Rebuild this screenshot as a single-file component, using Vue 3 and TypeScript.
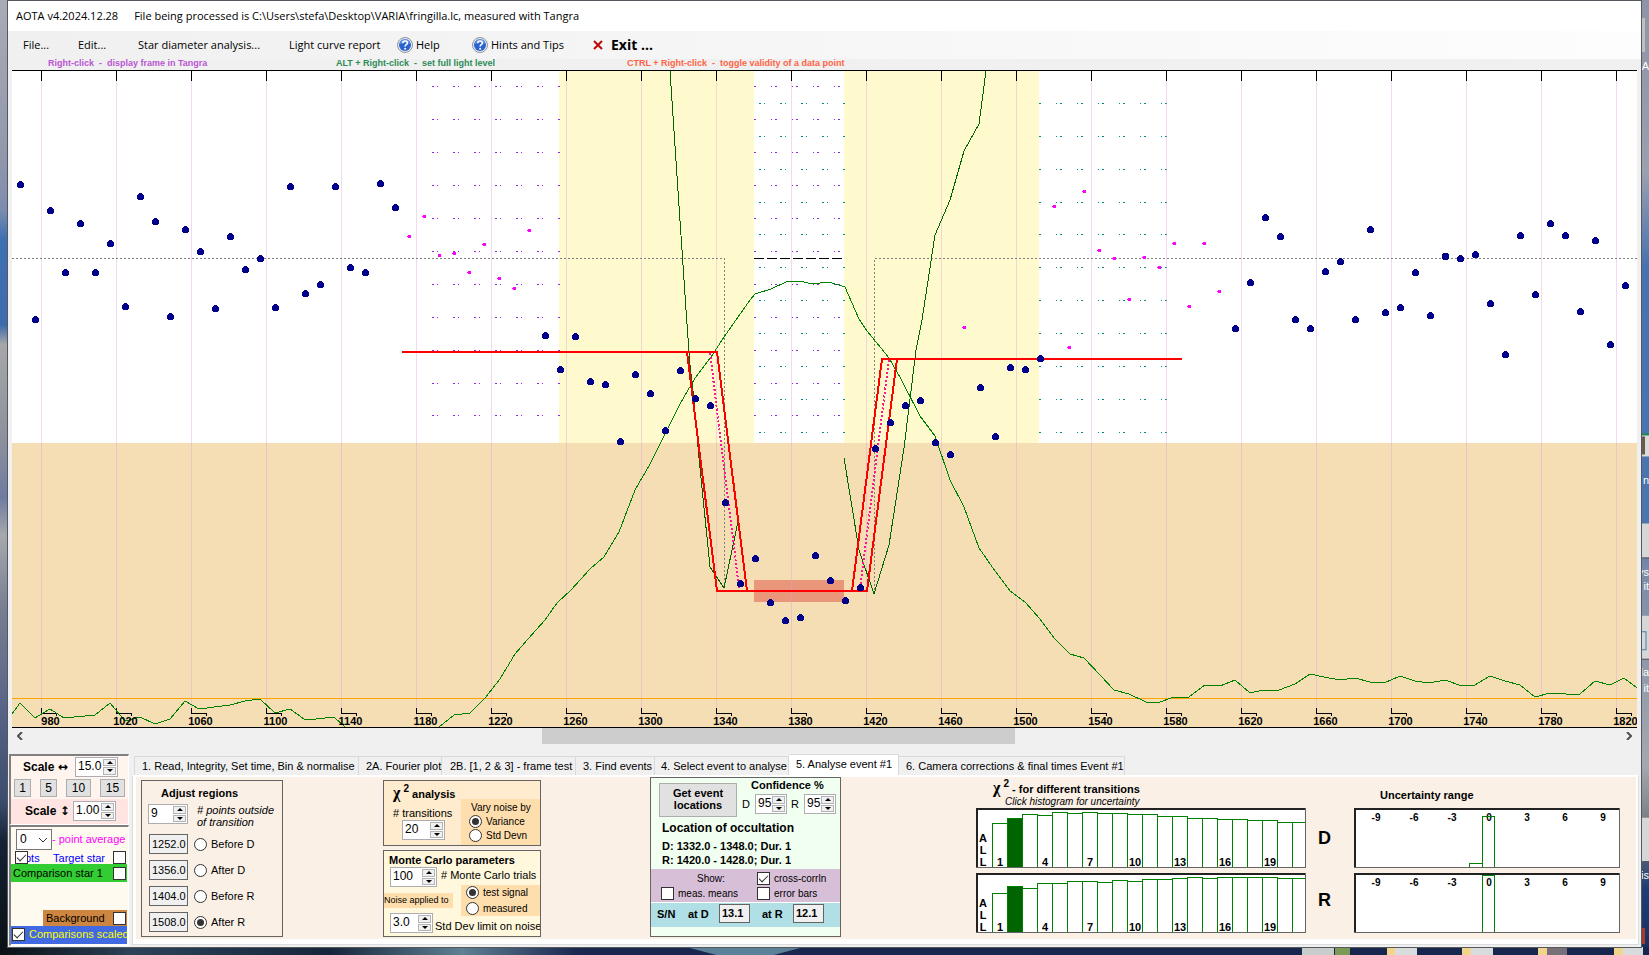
<script setup lang="ts">
import { defineComponent, h, ref } from 'vue'

const Spin = defineComponent({
  props: { label: String, value: String, id: String },
  setup(props) {
    return () =>
      h('span', { class: 'spin' }, [
        h('input', { id: props.id, type: 'text', value: props.value, 'aria-label': props.label }),
        h('span', { class: 'updown' }, [
          h('button', { type: 'button', class: 'up', 'aria-label': props.label + ' up' }),
          h('button', { type: 'button', class: 'down', 'aria-label': props.label + ' down' }),
        ]),
      ])
  },
})

const ticks: number[] = Array.from({ length: 22 }, (_, k) => k)
const tickX = (k: number): number => 41.5 + k * 75
const rows: number[] = Array.from({ length: 11 }, (_, k) => k)

const levels: number[] = [
  185, 320, 211, 273, 224, 273, 244, 307, 197, 222, 317, 230, 252, 309, 237, 270, 259, 308, 187, 294, 285, 187, 268, 273,
  184, 208, 236, 216, 255, 253, 272, 244, 278, 288, 230, 336, 370, 337, 382, 385, 442, 375, 394, 431, 371, 399, 406, 503,
  584, 559, 603, 621, 618, 556, 581, 601, 588, 449, 423, 406, 401, 443, 455, 327, 388, 437, 368, 370, 359, 206, 347, 191,
  250, 258, 299, 257, 267, 243, 306, 243, 291, 329, 283, 218, 237, 320, 329, 272, 262, 320, 230, 313, 308, 273, 316, 257,
  259, 255, 304, 355, 236, 295, 224, 236, 312, 241, 345, 286,
]
const excluded = (i: number): boolean => (i >= 26 && i <= 34) || i === 63 || (i >= 69 && i <= 80)
const points = levels.map((y, i) => ({
  x: (excluded(i) ? 19.5 : 20.5) + i * 15,
  y: excluded(i) ? y + 0.5 : y - 0.5,
  off: excluded(i),
}))

const correlation: string[] = [
  '12,714 20,703 35,718 50,709 64,718 95,715 110,703 125,721 140,717 155,724 170,719 185,701 199,709 230,705 245,701 260,699 275,713 290,709 304,719 316,719 334,717 345,727',
  '439,727 454,715 470,713 485,698 500,679 515,654 528,639 545,620 557,603 571,590 590,569 604,557 619,532 635,490 650,464 665,434 680,404 695,378 711,357 724,337 750,300 755,294 771,289 786,282 799,281 813,284 820,283 829,282 845,287 859,319 867,331 881,348 889,358 901,379 920,416 935,436 950,480 964,507 979,548 995,571 1010,591 1025,602 1040,619 1055,639 1070,654 1084,658 1100,675 1114,690 1129,694 1146,702 1160,702 1174,697 1189,697 1205,685 1220,686 1235,680 1250,693 1263,690 1279,690 1295,684 1310,674 1324,677 1340,680 1355,678 1370,682 1384,683 1400,676 1415,681 1429,683 1445,680 1459,685 1475,685 1490,676 1505,681 1520,685 1535,697 1550,693 1566,694 1580,694 1595,681 1610,685 1624,678 1637,688',
]
const chi: string[] = [
  '670,71 686,310 690,365 694,400 699,458 710,567 724,588 739,517',
  '844,458 859,550 874,594 889,545 904,448 916,350 922,320 935,235 950,200 964,151 979,124 986,71',
]

interface Hist { name: string; tops: number[] }
const hists: Hist[] = [
  { name: 'D', tops: [15, 10, 6, 7, 4, 5, 4, 5, 5, 6, 6, 8, 8, 10, 10, 11, 11, 12, 12, 14, 14] },
  { name: 'R', tops: [20, 13, 15, 10, 10, 8, 8, 9, 7, 8, 6, 6, 5, 4, 5, 4, 4, 4, 4, 5, 5] },
]
const ranges = [
  { name: 'D', bars: [{ x: 115, y: 55 }, { x: 128, y: 8 }] },
  { name: 'R', bars: [{ x: 128, y: 2 }] },
]
const rangeLabels: number[] = [-9, -6, -3, 0, 3, 6, 9]
const binLabels: number[] = [1, 4, 7, 10, 13, 16, 19]

const tabs: { text: string; w: string }[] = [
  { text: '1.  Read, Integrity, Set time, Bin & normalise', w: 'w1' },
  { text: '2A. Fourier plot', w: 'w2' },
  { text: '2B. [1, 2 & 3] - frame test', w: 'w3' },
  { text: '3. Find events', w: 'w4' },
  { text: '4. Select event to analyse', w: 'w5' },
  { text: '5. Analyse event #1', w: 'w6' },
  { text: '6. Camera corrections & final times Event #1', w: 'w7' },
]
const active = ref(5)
const regions = [
  { v: '1252.0', t: 'Before D' },
  { v: '1356.0', t: 'After D' },
  { v: '1404.0', t: 'Before R' },
  { v: '1508.0', t: 'After R' },
]
const region = ref('After R')
const noise = ref('Variance')
const applied = ref('test signal')
</script>

<template>
  <div class="desktop">
    <svg class="wallpaper" viewBox="0 0 1649 955" preserveAspectRatio="none" aria-hidden="true">
      <defs>
        <linearGradient id="sky" x1="0" y1="0" x2="0" y2="1">
          <stop offset="0" stop-color="#a9abb6" />
          <stop offset=".16" stop-color="#9298ab" />
          <stop offset=".22" stop-color="#7d8caf" />
          <stop offset=".25" stop-color="#3f70b0" />
          <stop offset=".34" stop-color="#3d6cad" />
          <stop offset=".36" stop-color="#a5a7a8" />
          <stop offset=".46" stop-color="#8d909c" />
          <stop offset=".52" stop-color="#6f7ba0" />
          <stop offset=".56" stop-color="#a6a8ad" />
          <stop offset=".64" stop-color="#777d90" />
          <stop offset=".74" stop-color="#596487" />
          <stop offset=".84" stop-color="#3a4c6c" />
          <stop offset=".88" stop-color="#142233" />
          <stop offset="1" stop-color="#0a1014" />
        </linearGradient>
        <linearGradient id="sky2" x1="0" y1="0" x2="0" y2="1">
          <stop offset="0" stop-color="#8f94a6" />
          <stop offset=".18" stop-color="#9aa0b0" />
          <stop offset=".28" stop-color="#4672ae" />
          <stop offset=".55" stop-color="#4b76b0" />
          <stop offset=".6" stop-color="#7c8ca8" />
          <stop offset=".8" stop-color="#a5a8ae" />
          <stop offset=".88" stop-color="#6a7078" />
          <stop offset=".93" stop-color="#1e3d75" />
          <stop offset="1" stop-color="#17305f" />
        </linearGradient>
        <linearGradient id="ground">
          <stop offset="0" stop-color="#0a1014" />
          <stop offset=".08" stop-color="#2b4258" />
          <stop offset=".2" stop-color="#16263a" />
          <stop offset=".28" stop-color="#5f7f92" />
          <stop offset=".35" stop-color="#1a2850" />
          <stop offset="1" stop-color="#16264c" />
        </linearGradient>
      </defs>
      <rect width="10" height="955" fill="url(#sky)" />
      <rect x="1640" width="9" height="955" fill="url(#sky2)" />
      <rect y="946" width="1649" height="9" fill="url(#ground)" />
      <path d="M690 947h110l-30 8h-50z" fill="#5a8198" />
      <path d="M1302 946h32v9h-32z" fill="#c9cccd" />
      <path d="M1335 946h15v9h-15z" fill="#7b9a55" />
      <path d="M1387 946h8v9h-8zM1462 946h9v9h-9zM1538 946h9v9h-9zM1614 946h9v9h-9z" fill="#f2d58a" />
      <path d="M1395 946h22v9h-22zM1471 946h22v9h-22zM1623 946h20v9h-20z" fill="#d9dcdc" />
      <path d="M1547 946h20v9h-20z" fill="#777079" />
      <path d="M1642 18h3v34h-3z" fill="#bfc0bd" />
      <path d="M1642 433h7v2h-7z" fill="#168a48" />
      <path d="M1642 435h7v21h-7z" fill="#d8dadb" />
      <path d="M1642 436h3v18h-3z" fill="#6d594c" />
      <path d="M1642 523h7v34h-7zM1642 615h7v43h-7zM1642 817h7v43h-7z" fill="#d5d7d6" />
      <path d="M1642 557h7v1h-7zM1642 658h7v1h-7z" fill="#555" />
      <path d="M1642 631h4v18h-4" fill="none" stroke="#477eaa" />
      <path d="M1642 927h3v16h-3z" fill="#a73c2e" />
    </svg>
    <aside class="peek" aria-hidden="true">
      <span class="p1">A</span><span class="p2">n</span><span class="p3">ys</span><span class="p4">it</span>
      <span class="p5">la</span><span class="p6">it</span><span class="p7">is</span>
    </aside>

    <main class="window">
      <header class="title"><span>AOTA v4.2024.12.28</span><span>File being processed is C:\Users\stefa\Desktop\VARIA\fringilla.lc, measured with Tangra</span></header>
      <nav class="menu">
        <button class="m1" type="button">File...</button>
        <button class="m2" type="button">Edit...</button>
        <button class="m3" type="button">Star diameter analysis...</button>
        <button class="m4" type="button">Light curve report</button>
        <button v-for="t in ['Help', 'Hints and Tips']" :key="t" :class="t === 'Help' ? 'm5' : 'm6'" type="button">
          <svg width="16" height="16" viewBox="0 0 16 16" aria-hidden="true">
            <circle cx="8" cy="8" r="7.5" fill="#e9edf2" stroke="#8f949c" />
            <circle cx="8" cy="8" r="6" fill="#2a62cf" />
            <path d="M3 7a5 5 0 0 1 10 0q-5-3-10 0z" fill="#7fa6e8" opacity=".7" />
            <path d="M5.800 6.200c0-3 4.600-2.900 4.600-.2 0 1.700-2.300 1.700-2.300 3.400" fill="none" stroke="#fff" stroke-width="1.600" />
            <circle cx="8.100" cy="11.700" r="1" fill="#fff" />
          </svg>{{ t }}
        </button>
        <button class="m7" type="button">
          <svg width="10" height="10" viewBox="0 0 10 10" aria-hidden="true"><path d="M1 1l8 8M9 1L1 9" fill="none" stroke="#c00808" stroke-width="2" /></svg>Exit ...
        </button>
      </nav>
      <div class="hints">
        <span class="h1">Right-click&nbsp; -&nbsp; display frame in Tangra</span>
        <span class="h2">ALT + Right-click&nbsp; -&nbsp; set full light level</span>
        <span class="h3">CTRL + Right-click&nbsp; -&nbsp; toggle validity of a data point</span>
      </div>

      <svg class="plot" viewBox="12 70 1625 658" role="img" aria-label="Light curve" shape-rendering="crispEdges">
        <rect x="12" y="70" width="1625" height="658" fill="#fff" />
        <path d="M559 71H754V443H559zM844 71H1039V443H844z" fill="#fffacd" />
        <rect x="12" y="443" width="1625" height="285" fill="#f5deb3" />
        <rect x="754" y="580" width="90" height="22" fill="#e9967a" />
        <g fill="none">
          <path v-for="r in rows" :key="'a' + r" :d="`M432 ${86.5 + r * 33 - (r > 9 ? 1 : 0)}H560`" stroke="#8a2be2" stroke-dasharray="2 3 1 15" />
          <path v-for="r in rows" :key="'b' + r" :d="`M754 ${86.5 + r * 33 - (r > 9 ? 1 : 0)}H844`" stroke="#8a2be2" stroke-dasharray="2 15 1 3" />
          <path v-for="r in rows" :key="'c' + r" :d="`M759 ${103.5 + r * 33 - (r > 3 ? 1 : 0)}H845`" stroke="#008b8b" stroke-dasharray="2 3 1 15" />
          <path v-for="r in rows" :key="'d' + r" :d="`M1039 ${103.5 + r * 33 - (r > 3 ? 1 : 0)}H1167`" stroke="#008b8b" stroke-dasharray="2 15 1 3" />
        </g>
        <path v-for="k in ticks" :key="'g' + k" :d="`M${tickX(k)} 71V728`" stroke="#dda0dd" stroke-opacity=".4" />
        <path v-for="k in ticks" :key="'t' + k" :d="`M${tickX(k)} 71v10M${tickX(k)} 708v6M${tickX(k)} 713.5h15v2`" stroke="#000" fill="none" />
        <g fill="none" stroke="#808080" stroke-dasharray="2 2">
          <path d="M12 258.500H724.500V590" /><path d="M1637 258.500H874.500V590" />
        </g>
        <path d="M754 258.500H843" stroke="#000" stroke-dasharray="10 3" />
        <path d="M12 698.500H1637" stroke="#ffa500" />
        <polyline v-for="(c, i) in correlation" :key="'k' + i" :points="c" fill="none" stroke="#008000" />
        <polyline v-for="(c, i) in chi" :key="'x' + i" :points="c" fill="none" stroke="#006400" />
        <g fill="none" stroke="#f00" stroke-width="2">
          <path d="M402 352H717L747 591M687 352L717 591H867L897 359M852 591L882 359H1182" />
        </g>
        <path d="M710 353L739 588M860 588L889 360" fill="none" stroke="#ff1493" stroke-width="2" stroke-dasharray="2 2" />
        <circle v-for="(p, i) in points" :key="'p' + i" :cx="p.x" :cy="p.y" :r="p.off ? 2 : 3.5" :fill="p.off ? '#ff00ff' : '#00008b'" />
        <text v-for="k in ticks" :key="'l' + k" :x="tickX(k) + 9" y="725" class="axis">{{ 980 + k * 40 }}</text>
        <path d="M12 70.500H1637M12 727.500H1637" stroke="#000" />
      </svg>

      <div class="scroll">
        <button type="button" aria-label="Scroll left"><svg width="6" height="8" viewBox="0 0 6 8"><path d="M5 0L1 4l4 4" fill="none" stroke="#505050" stroke-width="2" /></svg></button>
        <div class="track"><div class="thumb"></div></div>
        <button type="button" aria-label="Scroll right"><svg width="6" height="8" viewBox="0 0 6 8"><path d="M1 0l4 4-4 4" fill="none" stroke="#505050" stroke-width="2" /></svg></button>
      </div>

      <div class="bottom">
        <div class="side">
          <section class="scales">
            <div class="hs"><b>Scale <span class="arrow">↔</span></b><Spin label="Horizontal scale" value="15.0" class="s43" /></div>
            <div class="presets"><button v-for="n in [1, 5, 10, 15]" :key="n" type="button" :class="{ wide: n > 5 }">{{ n }}</button></div>
            <div class="vs"><b>Scale <span class="arrow">↕</span></b><Spin label="Vertical scale" value="1.00" class="s43" /></div>
          </section>
          <section class="series">
            <div class="avg"><span class="combo"><select id="avg"><option>0</option></select><svg width="10" height="6" viewBox="0 0 10 6"><path d="M1 1l4 4 4-4" fill="none" stroke="#333" /></svg></span><label for="avg">- point average</label></div>
            <div class="line target"><label class="pts"><input type="checkbox" checked /><span><i>pts</i></span></label><label class="tgt">Target star<input type="checkbox" /></label></div>
            <label class="line comp">Comparison star 1<input type="checkbox" /></label>
            <label class="line bg">Background<input type="checkbox" /></label>
            <label class="line scaled"><input type="checkbox" checked />Comparisons scaled</label>
          </section>
        </div>

        <div class="tabctl">
          <div class="tabs" role="tablist">
            <button v-for="(t, i) in tabs" :key="i" type="button" role="tab" :aria-selected="active === i" :class="[t.w, { on: active === i }]" @click="active = i">{{ t.text }}</button>
          </div>
          <div class="page">
            <div class="content">
              <section class="group adjust">
                <h3>Adjust regions</h3>
                <div class="outside"><Spin id="outside" label="points outside of transition" value="9" class="s40" /><label for="outside"># points outside<br />of transition</label></div>
                <div v-for="r in regions" :key="r.t" class="region">
                  <input type="text" class="val" :value="r.v" :aria-label="r.t + ' value'" />
                  <label><input v-model="region" type="radio" name="region" :value="r.t" />{{ r.t }}</label>
                </div>
              </section>

              <div class="middle">
                <section class="group chi">
                  <div class="chil">
                    <h3><span class="greek">χ</span> <sup>2</sup> analysis</h3>
                    <label for="trans"># transitions</label>
                    <Spin id="trans" label="transitions" value="20" class="s43" />
                  </div>
                  <div class="opts">
                    <span>Vary noise by</span>
                    <label v-for="o in ['Variance', 'Std Devn']" :key="o"><input v-model="noise" type="radio" name="noise" :value="o" />{{ o }}</label>
                  </div>
                </section>
                <section class="group monte">
                  <h3>Monte Carlo parameters</h3>
                  <div class="trials"><Spin id="trials" label="Monte Carlo trials" value="100" class="s47" /><label for="trials"># Monte Carlo trials</label></div>
                  <div class="apply">
                    <span class="cap">Noise applied to</span>
                    <div class="opts">
                      <label v-for="o in ['test signal', 'measured']" :key="o"><input v-model="applied" type="radio" name="applied" :value="o" />{{ o }}</label>
                    </div>
                  </div>
                  <div class="limit"><Spin id="limit" label="Std Dev limit" value="3.0" class="s43" /><label for="limit">Std Dev limit on noise</label></div>
                </section>
              </div>

              <section class="group event">
                <div class="evtop">
                  <button type="button" class="get">Get event<br />locations</button>
                  <div class="conf">
                    <h3>Confidence %</h3>
                    <div class="cr"><label for="cd">D</label><Spin id="cd" label="Confidence D" value="95" class="s32" /><label for="cr">R</label><Spin id="cr" label="Confidence R" value="95" class="s32" /></div>
                  </div>
                </div>
                <h2>Location of occultation</h2>
                <p>D: 1332.0 - 1348.0; Dur. 1</p>
                <p class="cut">R: 1420.0 - 1428.0; Dur. 1</p>
                <div class="show">
                  <span class="cap">Show:</span>
                  <label><input type="checkbox" checked />cross-corrln</label>
                  <label><input type="checkbox" />meas. means</label>
                  <label><input type="checkbox" />error bars</label>
                </div>
                <div class="sn"><b class="sn1">S/N</b><label for="snd" class="sn2">at D</label><input id="snd" type="text" value="13.1" /><label for="snr" class="sn3">at R</label><input id="snr" type="text" value="12.1" /></div>
              </section>

              <section class="transitions">
                <h3><span class="greek">χ</span> <sup>2</sup> - for different transitions</h3>
                <em>Click histogram for uncertainty</em>
                <svg v-for="d in hists" :key="d.name" class="box" width="330" height="60" viewBox="0 0 330 60" role="img" :aria-label="'Transitions ' + d.name" shape-rendering="crispEdges">
                  <rect width="330" height="60" fill="#fff" />
                  <rect v-for="(t, i) in d.tops" :key="i" :x="16.500 + i * 15" :y="t + 0.5" width="15" height="60" :fill="i === 1 ? '#006400' : '#fff'" stroke="#008000" />
                  <text v-for="b in binLabels" :key="b" :x="9 + b * 15" y="58" class="mid">{{ b }}</text>
                  <text x="7" y="34" class="mid">A</text><text x="7" y="46" class="mid">L</text><text x="7" y="58" class="mid">L</text>
                  <path d="M0 59.500H329.500V0" fill="none" stroke="#646464" /><path d="M.5 59V.5H329M1.500 59V1.500H329" fill="none" stroke="#222" />
                </svg>
              </section>

              <div class="letters"><strong>D</strong><strong>R</strong></div>

              <section class="uncert">
                <h3>Uncertainty range</h3>
                <svg v-for="d in ranges" :key="d.name" class="box" width="266" height="60" viewBox="0 0 266 60" role="img" :aria-label="'Uncertainty ' + d.name" shape-rendering="crispEdges">
                  <rect width="266" height="60" fill="#fff" />
                  <text v-for="(b, i) in rangeLabels" :key="b" :x="22 + i * 38 - (i > 2 ? 1 : 0)" y="13" class="mid small">{{ b }}</text>
                  <rect v-for="b in d.bars" :key="b.x" :x="b.x + 0.5" :y="b.y + 0.5" :width="b.x > 120 ? 12 : 13" height="60" fill="none" stroke="#008000" />
                  <path d="M0 59.500H265.500V0" fill="none" stroke="#646464" /><path d="M.5 59V.5H265M1.500 59V1.500H265" fill="none" stroke="#222" />
                </svg>
              </section>
            </div>
          </div>
        </div>
      </div>
    </main>
  </div>
</template>

<style>
html, body { margin: 0; background: #16264c; }
.spin { display: flex; box-sizing: border-box; height: 20px; border: 1px solid #abadb3; background: #fff; padding: 1px; flex: none; }
.spin input { flex: 1; min-width: 0; width: 0; border: 0; padding: 0 0 2px 1px; background: transparent; font: 12px "Liberation Sans", Arial, sans-serif; outline: 0; }
.spin .updown { width: 13px; display: flex; flex-direction: column; gap: 1px; }
.spin button { flex: 1; padding: 0; border: 1px solid #b4b4b4; background: #f0f0f0; display: flex; align-items: center; justify-content: center; }
.spin button::after { content: ""; border: 3px solid transparent; border-top-width: 0; border-bottom: 3px solid #000; }
.spin button.down::after { border-top: 3px solid #000; border-bottom-width: 0; }
.s32 { width: 32px; } .s40 { width: 40px; } .s43 { width: 43px; } .s47 { width: 47px; }
</style>

<style scoped>
* { box-sizing: border-box; }
h2, h3, p { margin: 0; font-weight: bold; white-space: nowrap; }
h3 { font-size: 11px; line-height: 14px; }
.desktop { position: relative; min-height: 100vh; padding: 0 7px 8px; overflow: hidden; font: 11px/14px "Liberation Sans", Arial, sans-serif; color: #000; }
.wallpaper { position: absolute; inset: 0; width: 100%; height: 100%; }
.peek span { position: absolute; right: 0; color: #fff; font-size: 11px; }
.p1 { top: 59px; } .p2 { top: 473px; } .p3 { top: 565px; } .p4 { top: 579px; } .p5 { top: 665px; } .p6 { top: 681px; } .p7 { top: 868px; }
.window { position: relative; background: #f0f0f0; border: 1px solid #55585e; }
.title { height: 30px; background: #fff; display: flex; align-items: center; gap: 16px; padding: 0 0 1px 8px; font: 11px "Open Sans", "Noto Sans", sans-serif; white-space: pre; }
.menu { height: 28px; display: flex; align-items: center; background: linear-gradient(90deg, #f0f0f0, #fdfdfd); padding: 0 0 1px 15px; }
.menu button { border: 0; padding: 0; background: none; font: 11px "Open Sans", "Noto Sans", sans-serif; text-align: left; white-space: nowrap; display: flex; align-items: center; gap: 3px; flex: none; }
.m1 { width: 55px; } .m2 { width: 60px; } .m3 { width: 151px; } .m4 { width: 108px; } .m5 { width: 75px; } .m6 { width: 121px; }
.menu .m7 { font-weight: 700; font-size: 14px; gap: 8px; }
.hints { height: 11px; display: flex; font-size: 9px; line-height: 8px; font-weight: bold; white-space: nowrap; padding-left: 40px; }
.h1 { color: #ba55d3; width: 288px; } .h2 { color: #2e8b57; width: 291px; } .h3 { color: #ff6347; }
.plot { display: block; margin: 0 4px; width: calc(100% - 8px); height: auto; }
.axis { font: bold 11px "Liberation Sans", Arial, sans-serif; text-anchor: middle; }
.scroll { height: 16px; padding: 0 4px; display: flex; }
.scroll button { width: 16px; border: 0; background: none; padding: 0; display: flex; align-items: center; justify-content: center; }
.track { flex: 1; display: flex; }
.thumb { margin-left: 32.25%; width: 29.7%; background: #cdcdcd; }
.bottom { display: flex; padding: 10px 2px 1px 1px; }
.side { width: 120px; flex: none; margin-right: 3px; }
.scales, .series { border: 2px solid #808080; border-right: 1px solid #fff; border-bottom: 1px solid #fff; overflow: hidden; }
.scales { height: 71px; background: #fff5ee; font-size: 12px; }
.hs, .vs { display: flex; align-items: center; white-space: nowrap; }
.hs { height: 21px; padding-left: 12px; }
.vs { height: 25px; padding: 0 0 1px 14px; background: #ffe4e1; }
.hs b { width: 52px; }
.vs b { width: 48px; }
.arrow { font-family: "DejaVu Sans", sans-serif; }
.presets { height: 22px; display: flex; justify-content: space-between; align-items: center; padding: 0 3px; }
.presets button { width: 17px; height: 18px; padding: 0; border: 1px solid #adadad; background: #e1e1e1; font: 12px "Liberation Sans", sans-serif; }
.presets .wide { width: 25px; }
.series { height: 121px; background: #fffaf0; font-size: 12px; padding-right: 1px; }
.avg { display: flex; align-items: center; height: 24px; padding-left: 5px; color: #f0f; white-space: nowrap; }
.combo { display: flex; position: relative; flex: none; }
.combo select { appearance: none; width: 36px; height: 21px; border: 1px solid #777; border-radius: 0; background: #fff; padding: 0 3px; font: 12px "Liberation Sans", sans-serif; }
.combo svg { position: absolute; right: 4px; top: 8px; }
.avg label { font-size: 11px; }
input[type="checkbox"], input[type="radio"] { appearance: none; margin: 0; width: 13px; height: 13px; border: 1px solid #333; background: #fff; flex: none; display: grid; place-items: center; }
input[type="radio"] { border-radius: 50%; }
input[type="radio"]:checked::after { content: ""; width: 7px; height: 7px; border-radius: 50%; background: #333; }
input[type="checkbox"]:checked::after { content: ""; width: 8px; height: 4px; border: solid #333; border-width: 0 0 1px 1px; transform: translateY(-1px) rotate(-45deg); }
.line { display: flex; align-items: center; white-space: nowrap; font-size: 11px; }
.target { height: 13px; padding-left: 4px; color: #00f; justify-content: space-between; }
.pts { display: flex; } .pts span { width: 16px; overflow: hidden; } .pts i { font-style: normal; margin-left: -3px; }
.tgt { display: flex; gap: 8px; }
.target, .comp, .bg { padding-right: 1px; }
.comp { height: 18px; background: #32cd32; justify-content: space-between; padding-left: 2px; }
.bg { height: 16px; margin: 28px 0 0 32px; background: #cd853f; justify-content: space-between; padding-left: 3px; }
.scaled { height: 18px; background: #4169e1; color: #ff0; padding: 0 0 2px 1px; gap: 4px; overflow: hidden; }
.tabctl { flex: 1; min-width: 0; }
.tabs { height: 21px; display: flex; align-items: flex-end; padding-left: 2px; }
.tabs button { height: 19px; border: 1px solid #d9d9d9; border-bottom: 0; border-left-width: 0; background: #f0f0f0; padding: 0 0 0 7px; font: 11px "Liberation Sans", sans-serif; text-align: left; white-space: nowrap; flex: none; }
.tabs .w1 { width: 225px; border-left-width: 1px; } .tabs .w2 { width: 83px; } .tabs .w3 { width: 134px; padding-left: 8px; } .tabs .w4 { width: 79px; } .tabs .w5 { width: 134px; padding-left: 6px; } .tabs .w6 { width: 110px; } .tabs .w7 { width: 226px; }
.tabs .on { height: 21px; background: #fff; padding-bottom: 2px; }
.page { border: 1px solid #dcdcdc; border-top-color: #fff; background: #fff; padding: 1px 2px 5px 3px; }
.content { height: 162px; background: #faf0e6; display: flex; overflow: hidden; }
.group { border: 1px solid #646464; flex: none; overflow: hidden; }
.adjust { width: 142px; margin: 3px 0 0 5px; height: 157px; padding: 5px 0 0 6px; }
.adjust h3 { padding-left: 13px; height: 18px; }
.outside { display: flex; gap: 9px; height: 30px; font-style: italic; line-height: 12px; white-space: nowrap; }
.region { display: flex; height: 26px; gap: 6px; padding-left: 1px; }
.region .val { width: 39px; height: 20px; }
.region label { display: flex; align-items: center; gap: 4px; height: 20px; }
.val, .sn input { border: 1px solid #646464; background: #f0f0f0; padding: 0 0 1px 2px; font: 11px "Liberation Sans", sans-serif; }
.middle { margin: 3px 0 0 100px; width: 158px; flex: none; }
.chi { height: 66px; background: #ffebcd; display: flex; }
.chil { flex: 1; padding: 5px 0 0 9px; display: flex; flex-direction: column; }
.chil > label { margin: 2px 0 0; }
.chil .s43 { margin-left: 9px; }
.chil h3 { height: 18px; line-height: 16px; }
.greek { font: bold 16px/14px "Liberation Serif", serif; }
sup { font-size: 10px; line-height: 1px; vertical-align: 6px; }
.opts { background: #ffdead; width: 79px; flex: none; font-size: 10px; display: flex; flex-direction: column; justify-content: space-around; }
.opts label { display: flex; align-items: center; gap: 4px; line-height: 13px; }
.chi .opts { margin-top: 18px; padding: 2px 0 2px 8px; }
.opts span { padding-left: 2px; line-height: 12px; }
.monte { margin-top: 4px; height: 87px; background: #fff8dc; }
.monte h3 { height: 16px; line-height: 18px; padding-left: 5px; }
.trials, .limit { display: flex; gap: 4px; padding-left: 6px; white-space: nowrap; }
.trials label { line-height: 16px; }
.trials { height: 18px; }
.limit { gap: 2px; } .limit label { line-height: 26px; }
.apply { display: flex; justify-content: space-between; height: 28px; align-items: flex-start; }
.apply .opts { height: 31px; padding-left: 5px; }
.apply .cap { margin-top: 8px; width: 69px; height: 15px; background: #ffdead; font-size: 9px; white-space: nowrap; overflow: hidden; }
.event { width: 191px; height: 160px; margin-left: 109px; background: #f0fff0; }
.evtop { display: flex; height: 42px; padding-left: 8px; }
.get { width: 78px; height: 34px; margin-top: 5px; border: 1px solid #adadad; background: #e1e1e1; font: bold 11px/12px "Liberation Sans", sans-serif; padding: 0 0 2px; }
.conf { flex: 1; } .conf h3 { padding-left: 14px; }
.cr { display: flex; padding: 2px 0 0 5px; } .cr label { width: 13px; line-height: 21px; } .cr .spin + label { margin-left: 4px; width: 13px; }
.event h2 { font-size: 12px; line-height: 17px; padding-left: 11px; }
.event p { font-size: 11px; line-height: 18px; padding-left: 11px; height: 18px; }
.event .cut { height: 14px; line-height: 10px; }
.show { height: 33px; background: #d8bfd8; display: grid; grid-template-columns: 96px 1fr; grid-template-rows: 15px 15px; padding: 2px 0 0 10px; font-size: 10px; align-items: center; }
.show .cap { padding-left: 36px; } .show label { display: flex; gap: 4px; align-items: center; line-height: 13px; }
.sn { height: 25px; border-top: 1px solid #fff; background: #b0e0e6; display: flex; font-weight: bold; padding-left: 6px; line-height: 23px; }
.sn1 { width: 31px; } .sn2 { width: 31px; } .sn3 { width: 31px; margin-left: 12px; }
.sn input { width: 31px; height: 19px; font-weight: bold; margin-top: 1px; }
.transitions { margin-left: 135px; flex: none; width: 330px; padding-top: 4px; }
.transitions h3 { padding-left: 17px; height: 15px; line-height: 15px; }
.transitions em { display: block; font-size: 10px; line-height: 12px; padding-left: 29px; }
.box { display: block; margin-bottom: 5px; }
.mid { text-anchor: middle; font: bold 11px "Liberation Sans", sans-serif; } .small { font-size: 10px; }
.letters { width: 48px; padding: 50px 0 0 12px; font-size: 18px; line-height: 22px; display: flex; flex-direction: column; gap: 40px; flex: none; }
.uncert h3 { padding: 11px 0 6px 26px; }
</style>
